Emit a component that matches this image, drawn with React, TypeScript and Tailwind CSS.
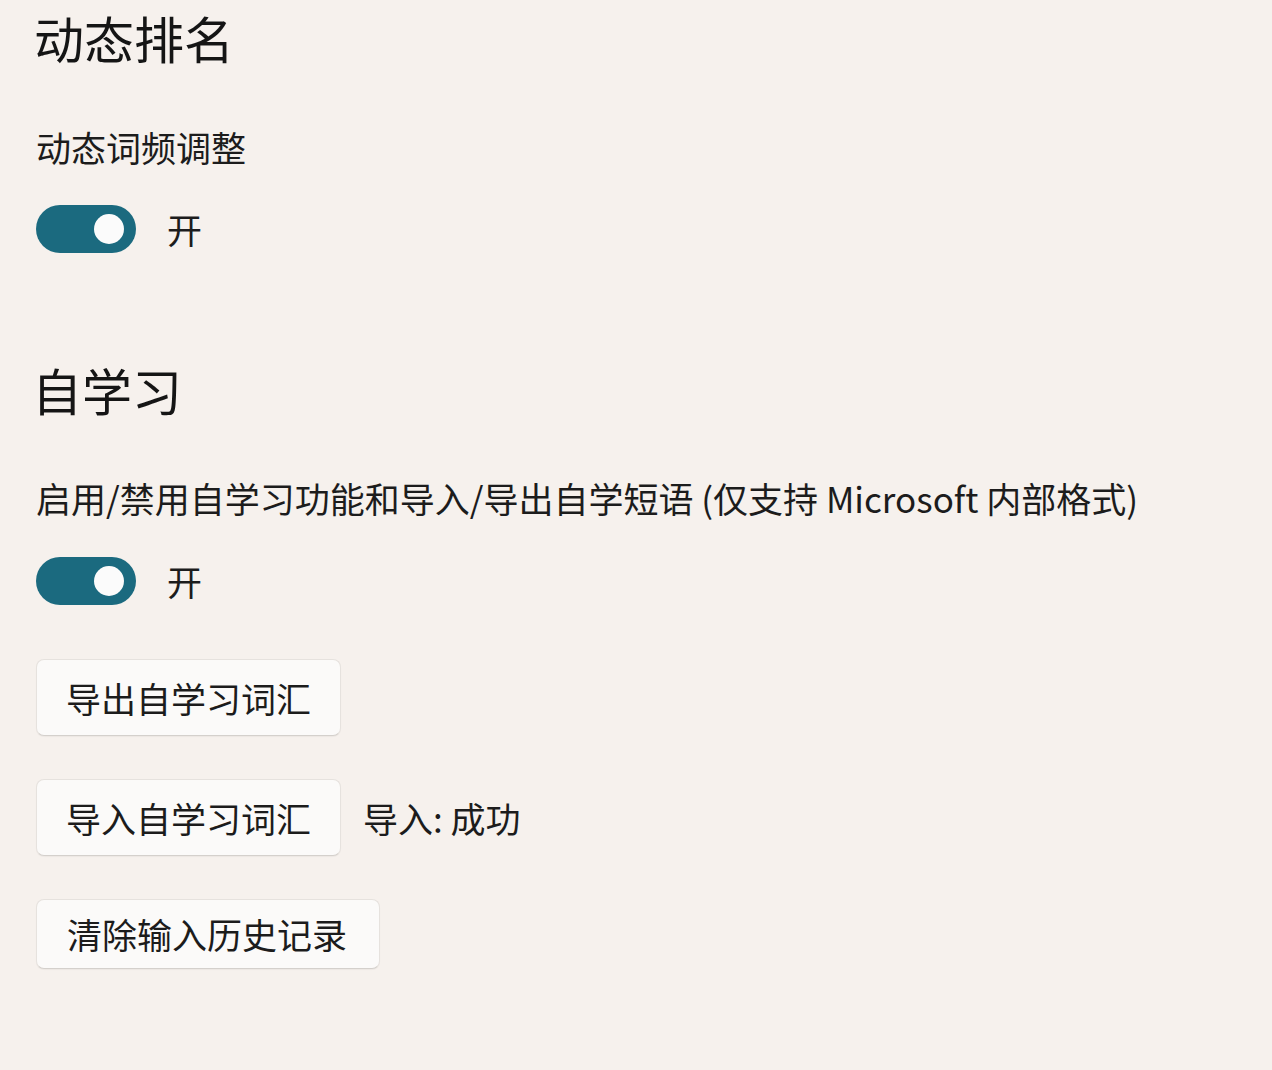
interface ToggleRowProps {
	label: string
}

function ToggleRow({ label }: ToggleRowProps): React.ReactElement {
	return (
		<div className="flex items-center gap-[31px]">
			<button className="flex h-[48px] w-[100px] items-center justify-end rounded-full bg-[#1b6a7f] pr-[12px]">
				<span className="h-[30px] w-[30px] rounded-full bg-[#fbfbfb]" />
			</button>
			<span className="text-[35px] leading-[42px] text-[#1c1c1c]">{label}</span>
		</div>
	)
}

interface ActionButtonProps {
	children: React.ReactNode
	className?: string
}

function ActionButton({ children, className = "h-[77px] px-[29px]" }: ActionButtonProps): React.ReactElement {
	return (
		<button
			className={`flex items-center rounded-[8px] border border-[#e6e2de] border-b-[#d4d0cc] bg-[#fbfaf9] text-[35px] leading-[42px] text-[#1c1c1c] shadow-[0_1px_1px_rgba(0,0,0,0.04)] ${className}`}
		>
			{children}
		</button>
	)
}

export default function App(): React.ReactElement {
	return (
		<div
			className="min-h-[1070px] w-full bg-[#f6f1ed] pl-[36px] pt-[7px]"
			style={{ fontFamily: '"Noto Sans CJK SC", "Noto Sans", sans-serif' }}
		>
			<h1 className="-ml-[2px] text-[50px] leading-[60px] text-[#151515]">动态排名</h1>
			<p className="mt-[59px] text-[35px] leading-[42px] text-[#1c1c1c]">动态词频调整</p>
			<div className="mt-[37px]">
				<ToggleRow label="开" />
			</div>

			<h1 className="-ml-[4px] mt-[106px] text-[50px] leading-[60px] text-[#151515]">自学习</h1>
			<p className="mt-[58px] text-[35px] leading-[42px] text-[#1c1c1c]">
				启用/禁用自学习功能和导入/导出自学短语 (仅支持 Microsoft 内部格式)
			</p>
			<div className="mt-[38px]">
				<ToggleRow label="开" />
			</div>

			<div className="mt-[54px] flex flex-col items-start gap-[43px]">
				<ActionButton>导出自学习词汇</ActionButton>
				<div className="flex items-center gap-[22px]">
					<ActionButton>导入自学习词汇</ActionButton>
					<span className="text-[35px] leading-[42px] text-[#1c1c1c]">导入: 成功</span>
				</div>
				<ActionButton className="h-[70px] pl-[30px] pr-[32px]">清除输入历史记录</ActionButton>
			</div>
		</div>
	)
}
